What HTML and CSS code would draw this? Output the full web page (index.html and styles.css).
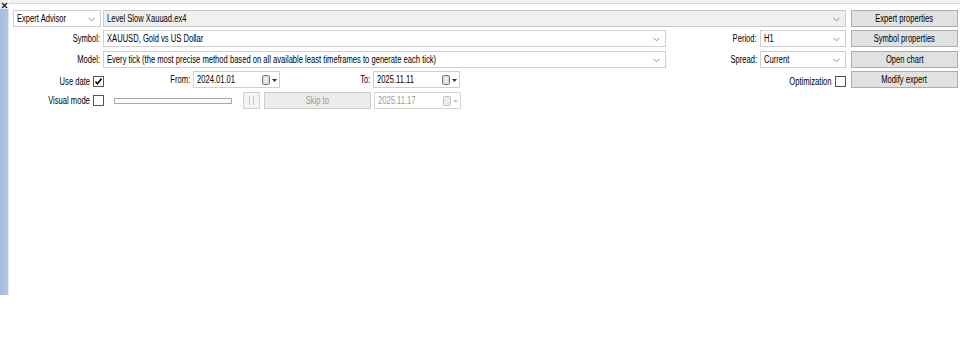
FILE: index.html
```html
<!DOCTYPE html>
<html>
<head>
<meta charset="utf-8">
<link rel="stylesheet" href="styles.css">
</head>
<body>
<div class="app">
  <div class="side">
    <div class="close"><svg width="7" height="7" viewBox="0 0 7 7"><path d="M1 1L6 6M6 1L1 6" stroke="#222" stroke-width="1.4"/></svg></div>
    <div class="strip"></div>
  </div>
  <div class="panel">
    <div class="row r1">
      <div class="combo w-ea"><span class="t">Expert Advisor</span><svg class="chev" width="7" height="5" viewBox="0 0 7 5"><path d="M0.5 0.8L3.5 3.8L6.5 0.8" fill="none" stroke="#8a8a8a"/></svg></div>
      <div class="combo grey w-level"><span class="t">Level Slow Xauuad.ex4</span><svg class="chev" width="7" height="5" viewBox="0 0 7 5"><path d="M0.5 0.8L3.5 3.8L6.5 0.8" fill="none" stroke="#8a8a8a"/></svg></div>
      <div class="btn"><span class="t">Expert properties</span></div>
    </div>
    <div class="row r2">
      <div class="lab w-lab1"><span class="t">Symbol:</span></div>
      <div class="combo w-main"><span class="t">XAUUSD, Gold vs US Dollar</span><svg class="chev" width="7" height="5" viewBox="0 0 7 5"><path d="M0.5 0.8L3.5 3.8L6.5 0.8" fill="none" stroke="#8a8a8a"/></svg></div>
      <div class="lab w-lab2"><span class="t">Period:</span></div>
      <div class="combo w-small"><span class="t">H1</span><svg class="chev" width="7" height="5" viewBox="0 0 7 5"><path d="M0.5 0.8L3.5 3.8L6.5 0.8" fill="none" stroke="#8a8a8a"/></svg></div>
      <div class="btn"><span class="t">Symbol properties</span></div>
    </div>
    <div class="row r3">
      <div class="lab w-lab1"><span class="t">Model:</span></div>
      <div class="combo w-main"><span class="t">Every tick (the most precise method based on all available least timeframes to generate each tick)</span><svg class="chev" width="7" height="5" viewBox="0 0 7 5"><path d="M0.5 0.8L3.5 3.8L6.5 0.8" fill="none" stroke="#8a8a8a"/></svg></div>
      <div class="lab w-lab2"><span class="t">Spread:</span></div>
      <div class="combo w-small"><span class="t">Current</span><svg class="chev" width="7" height="5" viewBox="0 0 7 5"><path d="M0.5 0.8L3.5 3.8L6.5 0.8" fill="none" stroke="#8a8a8a"/></svg></div>
      <div class="btn"><span class="t">Open chart</span></div>
    </div>
    <div class="row r4">
      <div class="lab low w-lab3"><span class="t">Use date</span></div>
      <div class="chk low"><svg width="9" height="9" viewBox="0 0 9 9"><path d="M1.5 4.5L3.5 6.8L7.5 1.5" fill="none" stroke="#000" stroke-width="1.6"/></svg></div>
      <div class="lab w-from"><span class="t">From:</span></div>
      <div class="date"><span class="t">2024.01.01</span><svg class="cal" width="16" height="10" viewBox="0 0 16 10"><rect x="1.5" y="0.5" width="7" height="9" rx="1" fill="#d4d4d4" stroke="#7a7a7a"/><rect x="3" y="2" width="4" height="6" fill="#ececec"/><path d="M11 4h5l-2.5 3z" fill="#333"/></svg></div>
      <div class="lab w-to"><span class="t">To:</span></div>
      <div class="date"><span class="t">2025.11.11</span><svg class="cal" width="16" height="10" viewBox="0 0 16 10"><rect x="1.5" y="0.5" width="7" height="9" rx="1" fill="#d4d4d4" stroke="#7a7a7a"/><rect x="3" y="2" width="4" height="6" fill="#ececec"/><path d="M11 4h5l-2.5 3z" fill="#333"/></svg></div>
      <div class="lab low w-opt"><span class="t">Optimization</span></div>
      <div class="chk low"></div>
      <div class="btn"><span class="t">Modify expert</span></div>
    </div>
    <div class="row r5">
      <div class="lab w-lab3"><span class="t">Visual mode</span></div>
      <div class="chk"></div>
      <div class="slider"></div>
      <div class="pause"><svg width="7" height="9" viewBox="0 0 7 9"><path d="M1.5 0v9M5.5 0v9" stroke="#c4c4c4" stroke-width="1"/></svg></div>
      <div class="btn dis skip"><span class="t">Skip to</span></div>
      <div class="date dis"><span class="t">2025.11.17</span><svg class="cal" width="16" height="10" viewBox="0 0 16 10"><rect x="1.5" y="0.5" width="7" height="9" rx="1" fill="#ececec" stroke="#c4c4c4"/><path d="M11 4h5l-2.5 3z" fill="#c4c4c4"/></svg></div>
    </div>
  </div>
</div>
</body>
</html>
```
FILE: styles.css
```css
* { box-sizing: border-box; }
html, body { margin: 0; padding: 0; background: #fff; }
body {
  font-family: "Liberation Sans", Arial, sans-serif;
  font-size: 10px;
  color: #000;
}
.app {
  display: flex;
  height: 295px;
  background: #f2f2f2;
}
.side {
  width: 9px;
  display: flex;
  flex-direction: column;
}
.close {
  height: 9px;
  padding: 2px 0 0 1px;
  line-height: 0;
}
.strip {
  flex: 1;
  background: linear-gradient(to right, #a4bbdf, #b2c6e6);
  border-right: 1px solid #dfe7f3;
}
.panel {
  flex: 1;
  margin-top: 3px;
  background: #fff;
  border-top: 1px solid #d6d6d6;
  padding: 6px 0 0 4px;
}
.row {
  display: flex;
  align-items: center;
  height: 17px;
}
.r2 { margin-top: 3px; }
.r3 { margin-top: 4px; }
.r4 { margin-top: 3px; }
.r5 { margin-top: 4px; }

.t {
  display: inline-block;
  white-space: nowrap;
  transform: scaleX(0.76);
  transform-origin: left center;
}
.lab {
  display: flex;
  justify-content: flex-end;
  padding-right: 3px;
  height: 17px;
  align-items: center;
}
.lab.low { padding-top: 4px; }
.lab .t { transform-origin: right center; }
.btn .t { transform-origin: center center; }

.combo, .date {
  position: relative;
  height: 17px;
  border: 1px solid #cfcfcf;
  background: #fff;
  padding-left: 3px;
  display: flex;
  align-items: center;
  overflow: hidden;
}
.combo.grey { background: #f0f0f0; border-color: #c9c9c9; }
.chev {
  position: absolute;
  right: 5px;
  top: 6px;
}
.w-ea { width: 88px; margin-right: 2px; }
.w-level { width: 743px; }
.w-lab1 { width: 90px; }
.w-main { width: 563px; }
.w-lab2 { width: 94px; }
.w-small { width: 86px; }
.w-lab3 { width: 80px; }
.w-from { width: 89px; }
.w-to { width: 93px; }
.w-opt { width: 375px; }

.btn {
  width: 107px;
  height: 17px;
  margin-left: 5px;
  background: #e1e1e1;
  border: 1px solid #adadad;
  display: flex;
  align-items: center;
  justify-content: center;
  color: #000;
}
.btn.dis {
  background: #ececec;
  border-color: #cdcdcd;
  color: #9a9a9a;
}
.skip { margin-left: 4px; }

.chk {
  width: 11px;
  height: 11px;
  border: 1px solid #555;
  background: #fff;
  display: flex;
  align-items: center;
  justify-content: center;
}
.chk.low { align-self: flex-end; margin-bottom: 1px; }
.date { width: 87px; color: #000; }
.date .cal { position: absolute; right: 2px; top: 3px; }
.date.dis { color: #9a9a9a; margin-left: 3px; border-color: #d6d6d6; }

.slider {
  width: 118px;
  height: 6px;
  margin-left: 10px;
  border: 1px solid #a8a8a8;
  background: #fbfbfb;
}
.pause {
  width: 17px;
  height: 17px;
  margin-left: 11px;
  border: 1px solid #d0d0d0;
  background: #f4f4f4;
  display: flex;
  align-items: center;
  justify-content: center;
}
```
